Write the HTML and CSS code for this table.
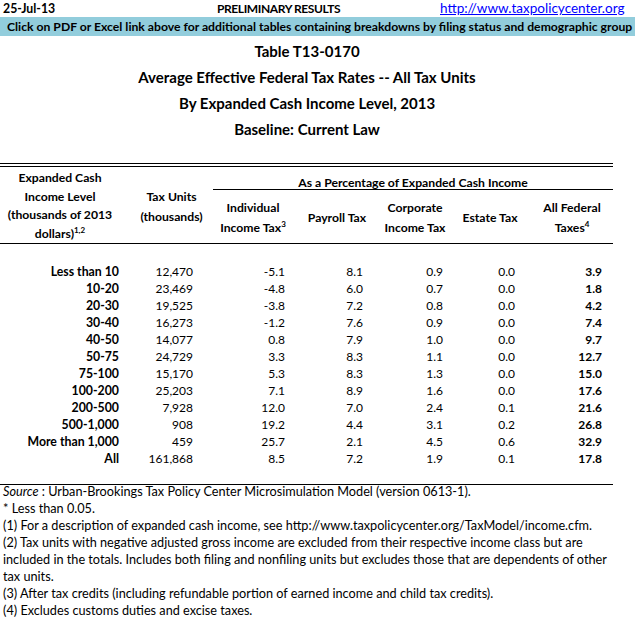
FILE: index.html
```html
<!DOCTYPE html>
<html>
<head>
<meta charset="utf-8">
<link rel="stylesheet" href="styles.css">
</head>
<body>
<div class="page">
  <div class="top">
    <span class="date">25-Jul-13</span>
    <span class="prelim">PRELIMINARY RESULTS</span>
    <a class="url" href="#">http://www.taxpolicycenter.org</a>
  </div>
  <div class="notice">Click on PDF or Excel link above for additional tables containing breakdowns by filing status and demographic group</div>
  <div class="titles">
    <div class="tline">Table T13-0170</div>
    <div class="tline">Average Effective Federal Tax Rates -- All Tax Units</div>
    <div class="tline">By Expanded Cash Income Level, 2013</div>
    <div class="tline">Baseline: Current Law</div>
  </div>
  <table class="data">
    <colgroup>
      <col class="c1"><col class="c2"><col class="c3"><col class="c4"><col class="c5"><col class="c6"><col class="c7">
    </colgroup>
    <thead>
      <tr class="h1">
        <th rowspan="2" class="lh">Expanded Cash<br>Income Level<br>(thousands of 2013<br>dollars)<sup>1,2</sup></th>
        <th rowspan="2" class="th2 tu">Tax Units<br>(thousands)</th>
        <th colspan="5" class="group">As a Percentage of Expanded Cash Income</th>
      </tr>
      <tr class="h2">
        <th class="th2">Individual<br>Income Tax<sup>3</sup></th>
        <th class="th2">Payroll Tax</th>
        <th class="th2">Corporate<br>Income Tax</th>
        <th class="th2">Estate Tax</th>
        <th class="th2">All Federal<br>Taxes<sup>4</sup></th>
      </tr>
    </thead>
    <tbody>
      <tr class="gap1"><td colspan="7"></td></tr>
      <tr><td>Less than 10</td><td>12,470</td><td>-5.1</td><td>8.1</td><td>0.9</td><td>0.0</td><td>3.9</td></tr>
      <tr><td>10-20</td><td>23,469</td><td>-4.8</td><td>6.0</td><td>0.7</td><td>0.0</td><td>1.8</td></tr>
      <tr><td>20-30</td><td>19,525</td><td>-3.8</td><td>7.2</td><td>0.8</td><td>0.0</td><td>4.2</td></tr>
      <tr><td>30-40</td><td>16,273</td><td>-1.2</td><td>7.6</td><td>0.9</td><td>0.0</td><td>7.4</td></tr>
      <tr><td>40-50</td><td>14,077</td><td>0.8</td><td>7.9</td><td>1.0</td><td>0.0</td><td>9.7</td></tr>
      <tr><td>50-75</td><td>24,729</td><td>3.3</td><td>8.3</td><td>1.1</td><td>0.0</td><td>12.7</td></tr>
      <tr><td>75-100</td><td>15,170</td><td>5.3</td><td>8.3</td><td>1.3</td><td>0.0</td><td>15.0</td></tr>
      <tr><td>100-200</td><td>25,203</td><td>7.1</td><td>8.9</td><td>1.6</td><td>0.0</td><td>17.6</td></tr>
      <tr><td>200-500</td><td>7,928</td><td>12.0</td><td>7.0</td><td>2.4</td><td>0.1</td><td>21.6</td></tr>
      <tr><td>500-1,000</td><td>908</td><td>19.2</td><td>4.4</td><td>3.1</td><td>0.2</td><td>26.8</td></tr>
      <tr><td>More than 1,000</td><td>459</td><td>25.7</td><td>2.1</td><td>4.5</td><td>0.6</td><td>32.9</td></tr>
      <tr><td>All</td><td>161,868</td><td>8.5</td><td>7.2</td><td>1.9</td><td>0.1</td><td>17.8</td></tr>
      <tr class="gap2"><td colspan="7"></td></tr>
    </tbody>
  </table>
  <div class="notes">
    <div class="note"><i>Source</i> : Urban-Brookings Tax Policy Center Microsimulation Model (version 0613-1).</div>
    <div class="note">* Less than 0.05.</div>
    <div class="note">(1) For a description of expanded cash income, see http://www.taxpolicycenter.org/TaxModel/income.cfm.</div>
    <div class="note">(2) Tax units with negative adjusted gross income are excluded from their respective income class but are</div>
    <div class="note">included in the totals. Includes both filing and nonfiling units but excludes those that are dependents of other</div>
    <div class="note">tax units.</div>
    <div class="note">(3) After tax credits (including refundable portion of earned income and child tax credits).</div>
    <div class="note">(4) Excludes customs duties and excise taxes.</div>
  </div>
</div>
</body>
</html>
```
FILE: styles.css
```css
html, body {
  margin: 0;
  padding: 0;
  background: #fff;
}
body {
  font-family: Lato, "Open Sans", sans-serif;
  font-size: 12.5px;
  color: #000;
}
.page {
  width: 635px;
}
.top {
  display: grid;
  grid-template-columns: 217px 223px auto;
  height: 17px;
  line-height: 17px;
  font-weight: bold;
}
.date {
  padding-left: 3px;
  font-size: 12.3px;
}
.prelim {
  font-size: 12px;
  letter-spacing: -0.4px;
}
.url {
  font-weight: normal;
  font-size: 13.5px;
  color: #0000ff;
  text-decoration: underline;
}
.notice {
  background: #92cddc;
  height: 19px;
  line-height: 19px;
  padding-left: 7px;
  font-weight: bold;
  font-size: 12.2px;
  white-space: nowrap;
}
.titles {
  width: 614px;
  margin-top: 2px;
  text-align: center;
  font-weight: bold;
  font-size: 15px;
}
.tline {
  height: 26px;
  line-height: 26px;
}
.data {
  margin-top: 21px;
  width: 613px;
  table-layout: fixed;
  border-collapse: collapse;
  border-top: 4px double #000;
  border-bottom: 1px solid #000;
}
.c1 { width: 122px; }
.c2 { width: 91px; }
.c3 { width: 80px; }
.c4 { width: 88px; }
.c5 { width: 68px; }
.c6 { width: 82px; }
.c7 { width: 82px; }
.data th {
  font-weight: bold;
  font-size: 12.2px;
  padding: 0;
  text-align: center;
  vertical-align: middle;
  line-height: 20px;
}
.data th.lh {
  line-height: 18.5px;
  border-bottom: 1px solid #000;
  padding-right: 2px;
  padding-top: 2px;
}
.data th.tu {
  padding-left: 8px;
  padding-top: 3px;
  border-bottom: 1px solid #000;
}
.h1 {
  height: 24px;
}
.data th.group {
  vertical-align: bottom;
  line-height: 12px;
  padding-bottom: 0;
  border-bottom: 1px solid #000;
}
.h2 {
  height: 54px;
}
.h2 th {
  border-bottom: 1px solid #000;
  padding-top: 4px;
}
sup {
  font-size: 8px;
  line-height: 0;
  vertical-align: 5px;
}
.data td {
  padding: 0;
  height: 17px;
  line-height: 17px;
  font-size: 12px;
  text-align: right;
  white-space: nowrap;
}
.data tr.gap1 td { height: 19px; }
.data tr.gap2 td { height: 17px; }
.data td:nth-child(1) { font-weight: bold; font-size: 12.3px; padding-right: 3px; }
.data td:nth-child(2) { padding-right: 20px; }
.data td:nth-child(3) { padding-right: 8px; }
.data td:nth-child(4) { padding-right: 18px; }
.data td:nth-child(5) { padding-right: 6px; }
.data td:nth-child(6) { padding-right: 16px; }
.data td:nth-child(7) { font-weight: bold; padding-right: 11px; }
.notes {
  padding-left: 3px;
  margin-top: -2px;
  font-size: 12.7px;
}
.note {
  height: 17px;
  line-height: 17px;
  white-space: nowrap;
}
```
